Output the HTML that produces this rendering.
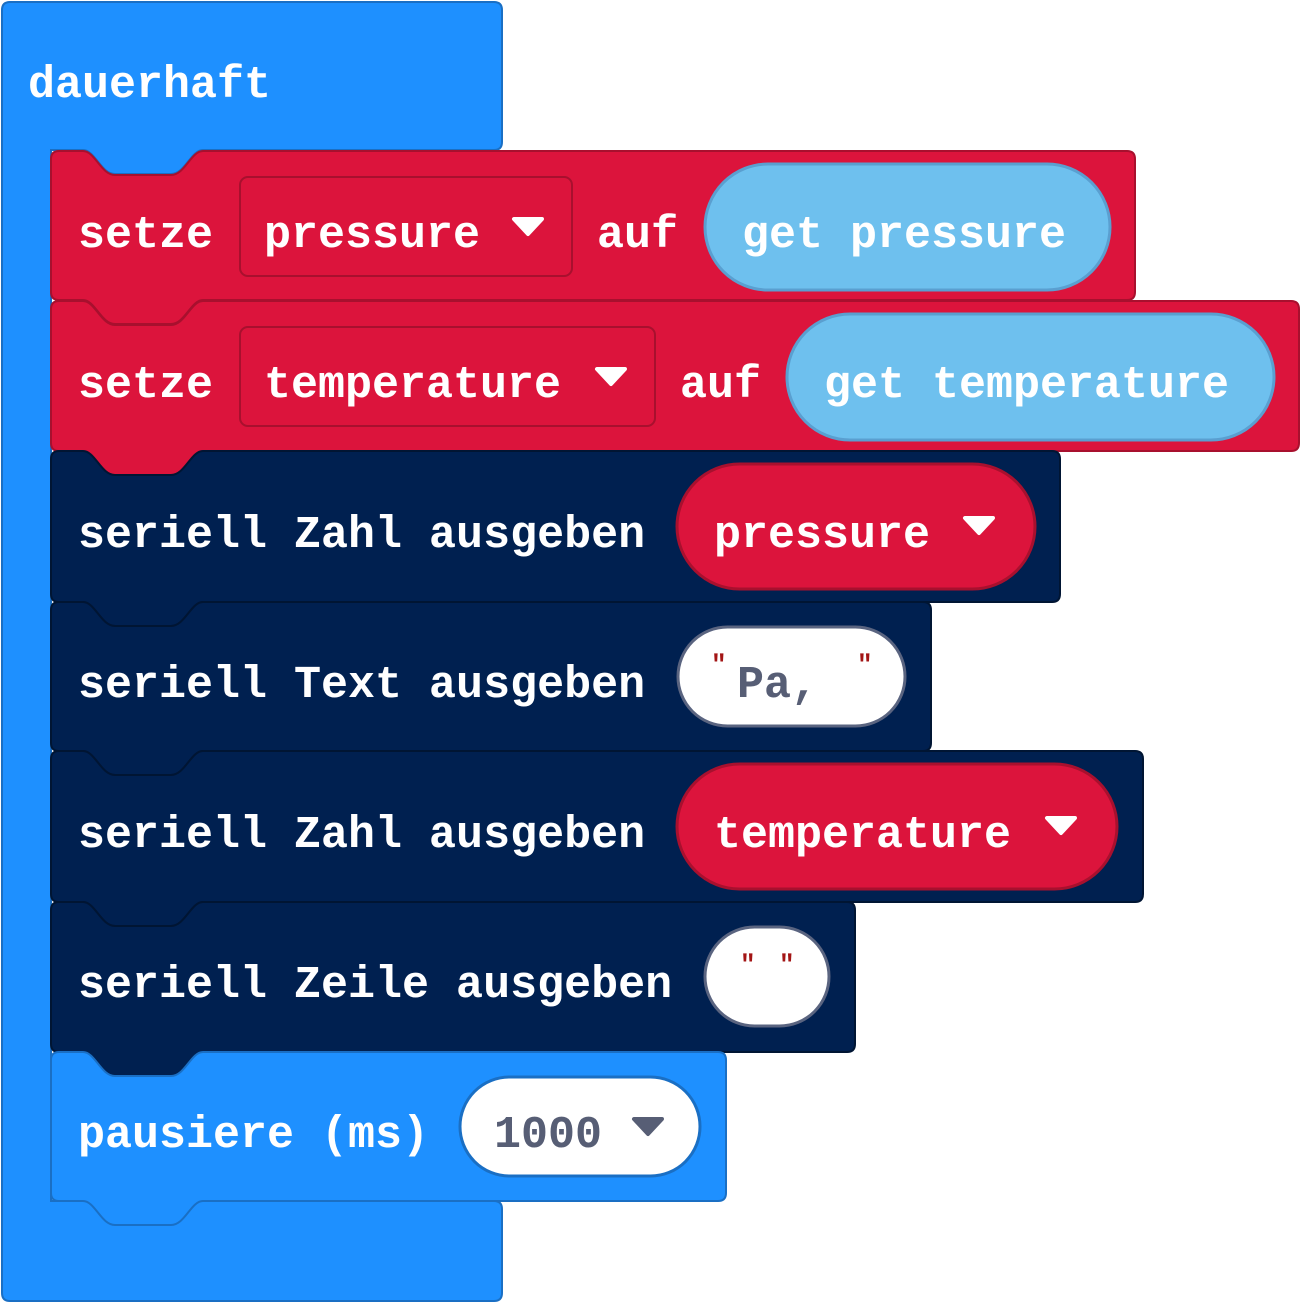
<!DOCTYPE html>
<html><head><meta charset="utf-8"><style>
html,body{margin:0;padding:0;background:#fff;width:1301px;height:1303px;overflow:hidden}
svg{display:block}
text{font-family:"Liberation Mono",monospace;font-weight:bold;font-size:45px;fill:#fff}
</style></head><body>
<svg id="s" width="1301" height="1303" viewBox="0 0 1301 1303">
<path d="M10,2 H494 Q502,2 502,10 V142 Q502,150 494,150 H203 C191,150 185,174 171,174 H115 C101,174 95,150 83,150 H51 V1201 H494 Q502,1201 502,1209 V1293 Q502,1301 494,1301 H10 Q2,1301 2,1293 V10 Q2,2 10,2 Z" fill="#1e90ff" stroke="#1a6fc4" stroke-width="2"/>
<text x="28" y="97">dauerhaft</text>
<g id="blocks"></g>
</svg>
<script>
function blk(x,y,w,h,fill,stroke){
 var r=8;
 var d='M'+(x+r)+','+y+' H'+(x+32)+' C'+(x+44)+','+y+' '+(x+50)+','+(y+24)+' '+(x+64)+','+(y+24)+' H'+(x+120)+' C'+(x+134)+','+(y+24)+' '+(x+140)+','+y+' '+(x+152)+','+y+
 ' H'+(x+w-r)+' Q'+(x+w)+','+y+' '+(x+w)+','+(y+r)+' V'+(y+h-r)+' Q'+(x+w)+','+(y+h)+' '+(x+w-r)+','+(y+h)+
 ' H'+(x+152)+' C'+(x+140)+','+(y+h)+' '+(x+134)+','+(y+h+24)+' '+(x+120)+','+(y+h+24)+' H'+(x+64)+' C'+(x+50)+','+(y+h+24)+' '+(x+44)+','+(y+h)+' '+(x+32)+','+(y+h)+
 ' H'+(x+r)+' Q'+x+','+(y+h)+' '+x+','+(y+h-r)+' V'+(y+r)+' Q'+x+','+y+' '+(x+r)+','+y+' Z';
 return '<path d="'+d+'" fill="'+fill+'" stroke="'+stroke+'" stroke-width="2"/>';
}
function pill(x1,y1,x2,y2,fill,stroke){var h=y2-y1;return '<rect x="'+x1+'" y="'+y1+'" width="'+(x2-x1)+'" height="'+h+'" rx="'+(h/2)+'" fill="'+fill+'" stroke="'+stroke+'" stroke-width="3"/>';}
function rr(x1,y1,x2,y2,fill,stroke){return '<rect x="'+x1+'" y="'+y1+'" width="'+(x2-x1)+'" height="'+(y2-y1)+'" rx="8" fill="'+fill+'" stroke="'+stroke+'" stroke-width="2"/>';}
function t(x,y,s,c){return '<text x="'+x+'" y="'+y+'"'+(c?' style="fill:'+c+'"':'')+' xml:space="preserve">'+s+'</text>';}
function arr(x,y,c){return '<path d="M'+(x-14)+','+(y-7)+' L'+(x+14)+','+(y-7)+' L'+x+','+(y+8)+' Z" fill="'+c+'" stroke="'+c+'" stroke-width="4" stroke-linejoin="round"/>';}
var R='#dc143c',RS='#a8102e',N='#002050',NS='#001533',B='#1e90ff',BS='#1a6fc4',LB='#6ec0ee',LBS='#5a9fd0';
var o='';
o+=blk(51,151,1084,149,R,RS);
o+=rr(240,177,572,276,R,RS)+t(78,247,'setze')+t(264,247,'pressure')+arr(528,226,'#fff')+t(597,247,'auf');
o+=pill(705,164,1110,290,LB,LBS)+t(742,247,'get pressure');
o+=blk(51,301,1248,150,R,RS);
o+=rr(240,327,655,426,R,RS)+t(78,397,'setze')+t(264,397,'temperature')+arr(611,376,'#fff')+t(680,397,'auf');
o+=pill(787,314,1274,440,LB,LBS)+t(824,397,'get temperature');
o+=blk(51,451,1009,151,N,NS);
o+=t(78,547,'seriell Zahl ausgeben')+pill(677,464,1035,589,R,RS)+t(714,547,'pressure')+arr(979,525,'#fff');
o+=blk(51,602,880,149,N,NS);
o+=t(78,697,'seriell Text ausgeben')+pill(678,627,905,726,'#fff','#5a6480');
o+='<text x="711" y="672" style="fill:#a31515;font-size:26px">"</text><text x="857" y="672" style="fill:#a31515;font-size:26px">"</text>'+t(737,697,'Pa,','#575e75');
o+=blk(51,751,1092,151,N,NS);
o+=t(78,847,'seriell Zahl ausgeben')+pill(677,764,1117,889,R,RS)+t(714,847,'temperature')+arr(1061,825,'#fff');
o+=blk(51,902,804,150,N,NS);
o+=t(78,997,'seriell Zeile ausgeben')+pill(705,927,829,1026,'#fff','#5a6480');
o+='<text x="740" y="972" style="fill:#a31515;font-size:26px">"</text><text x="779" y="972" style="fill:#a31515;font-size:26px">"</text>';
o+=blk(51,1052,675,149,B,BS);
o+=t(78,1147,'pausiere (ms)')+pill(460,1077,700,1176,'#fff',BS)+t(494,1147,'1000','#575e75')+arr(648,1126,'#575e75');
document.getElementById('blocks').innerHTML=o;
</script>
</body></html>
